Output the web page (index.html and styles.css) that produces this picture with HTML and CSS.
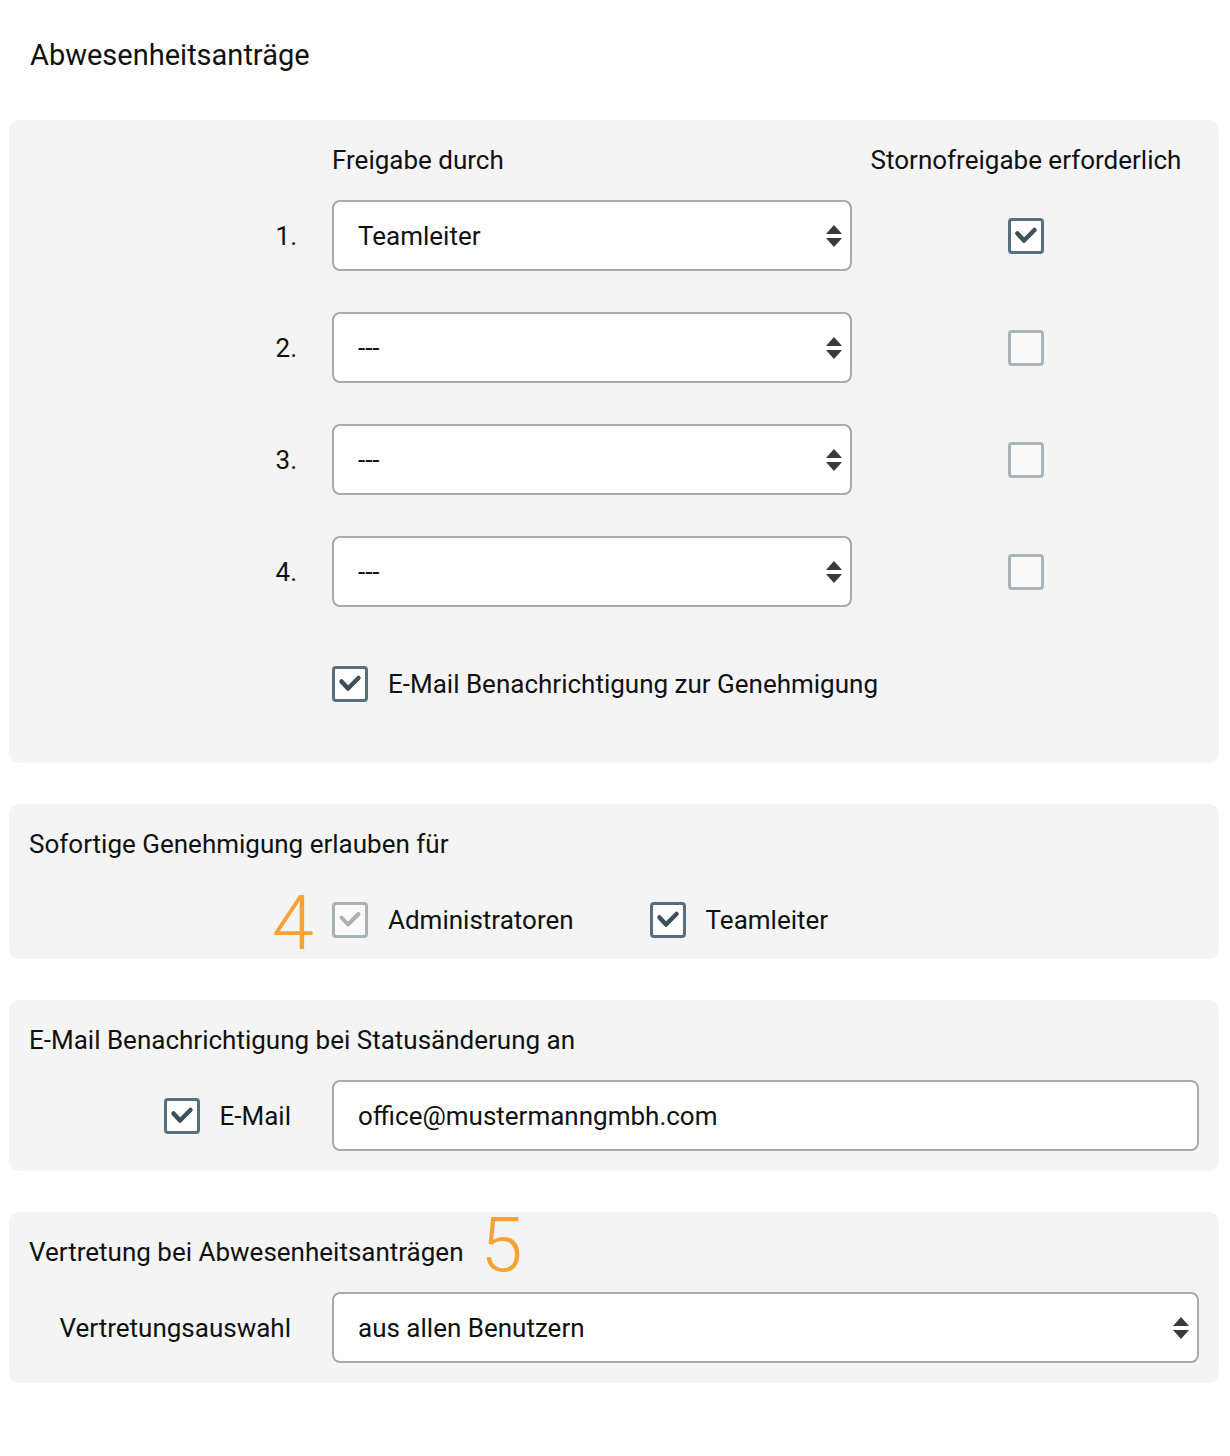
FILE: index.html
```html
<!doctype html>
<html lang="de">
<head>
  <meta charset="UTF-8" />
  <meta name="viewport" content="width=device-width, initial-scale=1" />
  <title>Abwesenheitsanträge</title>
  <link rel="stylesheet" href="styles.css">
</head>
<body>
  <h1 class="page-title">Abwesenheitsanträge</h1>

  <!-- Freigabe-Kette -->
  <section class="panel panel-approval">
    <div class="approval-grid approval-head">
      <div></div>
      <div>Freigabe durch</div>
      <div class="center">Stornofreigabe erforderlich</div>
    </div>
    <div class="approval-grid">
      <div class="row-label">1.</div>
      <div class="select-wrap narrow">
        <select class="select"><option>Teamleiter</option></select>
        <svg class="select-arrow" width="16" height="24" viewBox="0 0 16 24"><path d="M8 1 L16 10 H0 Z M0 14 H16 L8 23 Z" fill="#3a3a3a"/></svg>
      </div>
      <div class="center"><span class="check checked"><svg width="30" height="30" viewBox="0 0 30 30"><path d="M6.5 12.5 L13 19.5 L23.5 9" fill="none" stroke="#3d505b" stroke-width="4.5" stroke-linecap="round" stroke-linejoin="round"/></svg></span></div>

      <div class="row-label">2.</div>
      <div class="select-wrap narrow">
        <select class="select"><option>---</option></select>
        <svg class="select-arrow" width="16" height="24" viewBox="0 0 16 24"><path d="M8 1 L16 10 H0 Z M0 14 H16 L8 23 Z" fill="#3a3a3a"/></svg>
      </div>
      <div class="center"><span class="check"></span></div>

      <div class="row-label">3.</div>
      <div class="select-wrap narrow">
        <select class="select"><option>---</option></select>
        <svg class="select-arrow" width="16" height="24" viewBox="0 0 16 24"><path d="M8 1 L16 10 H0 Z M0 14 H16 L8 23 Z" fill="#3a3a3a"/></svg>
      </div>
      <div class="center"><span class="check"></span></div>

      <div class="row-label">4.</div>
      <div class="select-wrap narrow">
        <select class="select"><option>---</option></select>
        <svg class="select-arrow" width="16" height="24" viewBox="0 0 16 24"><path d="M8 1 L16 10 H0 Z M0 14 H16 L8 23 Z" fill="#3a3a3a"/></svg>
      </div>
      <div class="center"><span class="check"></span></div>

      <div></div>
      <label class="check-label wide">
        <span class="check checked"><svg width="30" height="30" viewBox="0 0 30 30"><path d="M6.5 12.5 L13 19.5 L23.5 9" fill="none" stroke="#3d505b" stroke-width="4.5" stroke-linecap="round" stroke-linejoin="round"/></svg></span>
        E-Mail Benachrichtigung zur Genehmigung
      </label>
    </div>
  </section>

  <!-- Sofortige Genehmigung -->
  <section class="panel panel-instant">
    <div class="panel-title">Sofortige Genehmigung erlauben für</div>
    <div class="form-row">
      <div></div>
      <div class="option-list">
        <label class="check-label">
          <span class="marker marker-4">4</span>
          <span class="check checked disabled"><svg width="30" height="30" viewBox="0 0 30 30"><path d="M6.5 12.5 L13 19.5 L23.5 9" fill="none" stroke="#a9b1b6" stroke-width="4" stroke-linecap="round" stroke-linejoin="round"/></svg></span>
          Administratoren
        </label>
        <label class="check-label">
          <span class="check checked"><svg width="30" height="30" viewBox="0 0 30 30"><path d="M6.5 12.5 L13 19.5 L23.5 9" fill="none" stroke="#3d505b" stroke-width="4.5" stroke-linecap="round" stroke-linejoin="round"/></svg></span>
          Teamleiter
        </label>
      </div>
    </div>
  </section>

  <!-- Benachrichtigung -->
  <section class="panel">
    <div class="panel-title">E-Mail Benachrichtigung bei Statusänderung an</div>
    <div class="form-row">
      <label class="check-label end">
        <span class="check checked"><svg width="30" height="30" viewBox="0 0 30 30"><path d="M6.5 12.5 L13 19.5 L23.5 9" fill="none" stroke="#3d505b" stroke-width="4.5" stroke-linecap="round" stroke-linejoin="round"/></svg></span>
        E-Mail
      </label>
      <input class="text-input" type="text" value="office@mustermanngmbh.com" />
    </div>
  </section>

  <!-- Vertretung -->
  <section class="panel">
    <div class="panel-title">Vertretung bei Abwesenheitsanträgen<span class="marker marker-5">5</span></div>
    <div class="form-row">
      <div class="field-label">Vertretungsauswahl</div>
      <div class="select-wrap">
        <select class="select"><option>aus allen Benutzern</option></select>
        <svg class="select-arrow" width="16" height="24" viewBox="0 0 16 24"><path d="M8 1 L16 10 H0 Z M0 14 H16 L8 23 Z" fill="#3a3a3a"/></svg>
      </div>
    </div>
  </section>
</body>
</html>
```

FILE: styles.css
```css
body {
  margin: 0;
  padding: 0 11px 0 9px;
  background: #fff;
  color: #111;
  font-family: Roboto, 'Noto Sans', sans-serif;
  font-size: 26px;
}
.page-title {
  margin: 0;
  padding: 35px 0 0 21px;
  height: 120px;
  box-sizing: border-box;
  font-size: 29px;
  font-weight: 400;
  line-height: 40px;
}
.panel {
  background: #f4f4f4;
  border-radius: 10px;
  padding: 20px 20px;
  margin-bottom: 41px;
}
.panel-approval {
  padding-bottom: 44px;
}
.approval-grid {
  display: grid;
  grid-template-columns: 303px 539px 310px;
  grid-auto-rows: 71px;
  row-gap: 41px;
}
.approval-head {
  grid-auto-rows: 40px;
  line-height: 40px;
  margin-bottom: 20px;
  white-space: nowrap;
}
.center {
  display: flex;
  justify-content: center;
  align-items: center;
}
.row-label {
  display: flex;
  align-items: center;
  justify-content: flex-end;
  padding-right: 35px;
}
.select-wrap {
  position: relative;
  height: 71px;
}
.select-wrap.narrow {
  width: 520px;
}
.select,
.text-input {
  appearance: none;
  -webkit-appearance: none;
  width: 100%;
  height: 71px;
  box-sizing: border-box;
  border: 2px solid #a9a9a9;
  border-radius: 8px;
  background: #fff;
  padding: 0 24px;
  font-family: inherit;
  font-size: 26px;
  color: #111;
  outline: none;
}
.select-arrow {
  position: absolute;
  right: 10px;
  top: 24px;
  pointer-events: none;
}
.check {
  display: inline-flex;
  align-items: center;
  justify-content: center;
  width: 36px;
  height: 36px;
  box-sizing: border-box;
  border: 3px solid #a9b4ba;
  border-radius: 4px;
  background: #fafafa;
  flex: none;
}
.check.checked {
  border-color: #566f7d;
  background: #fff;
}
.check.checked.disabled {
  border-color: #a7b1b8;
  background: #fafafa;
}
.check-label {
  position: relative;
  display: flex;
  align-items: center;
  gap: 20px;
}
.check-label.wide {
  grid-column: 2 / 4;
}
.panel-title {
  line-height: 40px;
  margin-bottom: 20px;
}
.form-row {
  display: grid;
  grid-template-columns: 303px 1fr;
  align-items: center;
}
.form-row .end,
.field-label {
  justify-content: flex-end;
  text-align: right;
  padding-right: 41px;
}
.option-list {
  display: flex;
  align-items: center;
  gap: 76px;
  height: 56px;
}
.panel-instant {
  padding-bottom: 11px;
}
.panel-instant .panel-title {
  margin-bottom: 28px;
}
.marker {
  color: #f6a235;
  font-weight: 300;
  font-size: 76px;
  line-height: 0;
}
.marker-4 {
  position: absolute;
  right: 100%;
  margin-right: 18px;
  top: 21px;
}
.marker-5 {
  display: inline-block;
  margin-left: 17px;
  vertical-align: -10px;
}
```
